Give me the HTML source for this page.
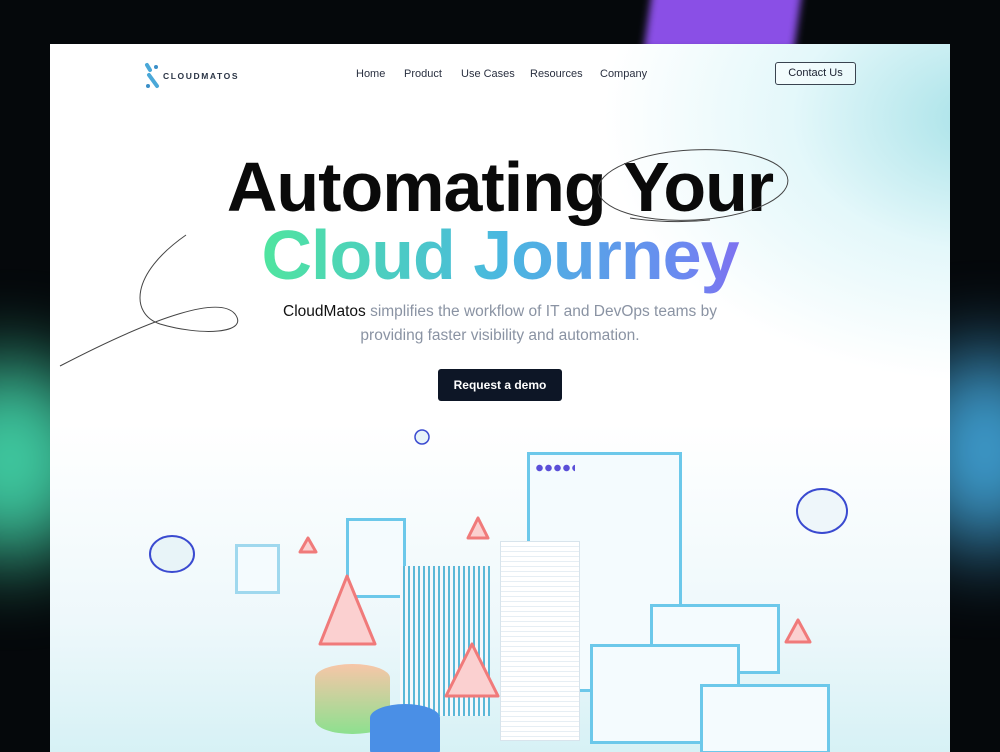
<!DOCTYPE html>
<html><head><meta charset="utf-8"><style>
*{margin:0;padding:0;box-sizing:border-box}
body{width:1000px;height:752px;overflow:hidden;background:#05080b;font-family:"Liberation Sans",sans-serif;position:relative}
.glow{position:absolute;border-radius:50%;filter:blur(30px)}
.card{position:absolute;left:50px;top:44px;width:900px;height:708px;background:#fff;overflow:hidden}
.nav a{position:absolute;top:24px;font-size:11px;color:#2a3040}
.btn{position:absolute;left:725px;top:18px;width:81px;height:23px;border:1px solid #3a4450;border-radius:3px;font-size:11px;color:#1a2030;text-align:center;line-height:21px;background:rgba(255,255,255,.5)}
h1{position:absolute;left:0;width:900px;text-align:center;font-weight:bold;font-size:70px;letter-spacing:-1px}
.sub{position:absolute;top:256px;left:0;width:900px;text-align:center;font-size:15.5px;line-height:24px;color:#8a93a3}
.demo{position:absolute;left:388px;top:325px;width:124px;height:32px;background:#0d1626;border-radius:3px;color:#fff;font-size:12px;font-weight:bold;text-align:center;line-height:32px}
.b{position:absolute;border:3px solid #6cc8ea;background:#f4fbfe}
</style></head><body>
<div style="position:absolute;left:648px;top:-10px;width:150px;height:60px;background:#8a4fe6;transform:skewX(-8deg);filter:blur(4px)"></div>
<div class="glow" style="left:-80px;top:360px;width:180px;height:200px;background:#3fc9a0;filter:blur(40px)"></div>
<div class="glow" style="left:910px;top:350px;width:150px;height:200px;background:#3f9ed0;filter:blur(40px)"></div>
<div class="card">
<div style="position:absolute;left:550px;top:-40px;width:450px;height:380px;background:radial-gradient(ellipse at 85% 30%,#a8e2e8 0%,rgba(200,240,245,.5) 35%,rgba(255,255,255,0) 70%)"></div>
<div style="position:absolute;left:0;top:380px;width:900px;height:330px;background:linear-gradient(180deg,#fff 0%,#eef8fb 60%,#d6f1f5 100%)"></div>
<svg style="position:absolute;left:94px;top:18px" width="18" height="28"><g stroke="#4aa8d8" stroke-width="4" stroke-linecap="round"><line x1="3" y1="3" x2="6" y2="8"/><line x1="5" y1="13" x2="13" y2="24"/></g><circle cx="12" cy="5" r="2" fill="#3a8fc8"/><circle cx="4" cy="24" r="2" fill="#3a8fc8"/></svg>
<div style="position:absolute;left:113px;top:27px;font-size:8.5px;font-weight:bold;letter-spacing:1.6px;color:#2a3445">CLOUDMATOS</div>
<div class="nav"><a style="left:306px">Home</a><a style="left:354px">Product</a><a style="left:411px">Use Cases</a><a style="left:480px">Resources</a><a style="left:550px">Company</a></div>
<div class="btn">Contact Us</div>
<h1 style="top:103px;color:#0a0a0a">Automating Your</h1>
<h1 style="top:171px;background:linear-gradient(90deg,#4fe4a0 24%,#4ab8e0 50%,#6a8af0 70%,#9a4ff0 86%);-webkit-background-clip:text;background-clip:text;color:transparent">Cloud Journey</h1>
<svg style="position:absolute;left:0;top:0" width="900" height="400" fill="none" stroke="#444" stroke-width="1"><ellipse cx="643" cy="141" rx="95" ry="35" transform="rotate(-3 643 141)"/><path d="M580 174 Q620 180 660 176"/><path d="M136 191 C80 230 80 270 110 280 C150 292 200 290 185 270 C170 252 110 270 10 322"/></svg>
<div class="sub"><span style="color:#111">CloudMatos</span> simplifies the workflow of IT and DevOps teams by<br>providing faster visibility and automation.</div>
<div class="demo">Request a demo</div>
<div class="b" style="left:477px;top:408px;width:155px;height:240px"></div>
<div style="position:absolute;left:485px;top:420px;width:40px;height:8px;background:radial-gradient(circle,#5a4fd8 3px,transparent 3.5px) 0 0/9px 8px"></div>
<div class="b" style="left:296px;top:474px;width:60px;height:80px"></div>
<div class="b" style="left:185px;top:500px;width:45px;height:50px;border-color:#9fd8ee"></div>
<div style="position:absolute;left:450px;top:497px;width:80px;height:200px;background:repeating-linear-gradient(180deg,#fff 0 4px,#e6eef4 4px 5px);border:1px solid #d8e4ec"></div>
<div style="position:absolute;left:350px;top:522px;width:90px;height:150px;background:repeating-linear-gradient(90deg,#f4f8fb 0 3px,#5ab8d8 3px 5px)"></div>
<div class="b" style="left:600px;top:560px;width:130px;height:70px"></div>
<div class="b" style="left:540px;top:600px;width:150px;height:100px"></div>
<div class="b" style="left:650px;top:640px;width:130px;height:70px"></div>
<div style="position:absolute;left:265px;top:620px;width:75px;height:70px;border-radius:37px/14px;background:linear-gradient(180deg,#f7c6a8,#8de08f)"></div>
<div style="position:absolute;left:320px;top:660px;width:70px;height:60px;border-radius:35px/14px;background:#4a8fe6"></div>
<svg style="position:absolute;left:0;top:0" width="900" height="708"><g fill="#fbd0d0" stroke="#f07a7a" stroke-width="3" stroke-linejoin="round"><path d="M297 532 L325 600 L270 600 Z"/><path d="M422 600 L448 652 L396 652 Z"/><path d="M748 576 L760 598 L736 598 Z"/><path d="M428 474 L438 494 L418 494 Z"/><path d="M258 494 L266 508 L250 508 Z"/></g>
<ellipse cx="122" cy="510" rx="22" ry="18" fill="#e8f4f8" stroke="#3a4ad0" stroke-width="2"/><ellipse cx="772" cy="467" rx="25" ry="22" fill="#eef6fa" stroke="#3a4ad0" stroke-width="2"/><circle cx="372" cy="393" r="7" fill="#e8f4f8" stroke="#3a4ad0" stroke-width="1.5"/></svg>
</div>
</body></html>
